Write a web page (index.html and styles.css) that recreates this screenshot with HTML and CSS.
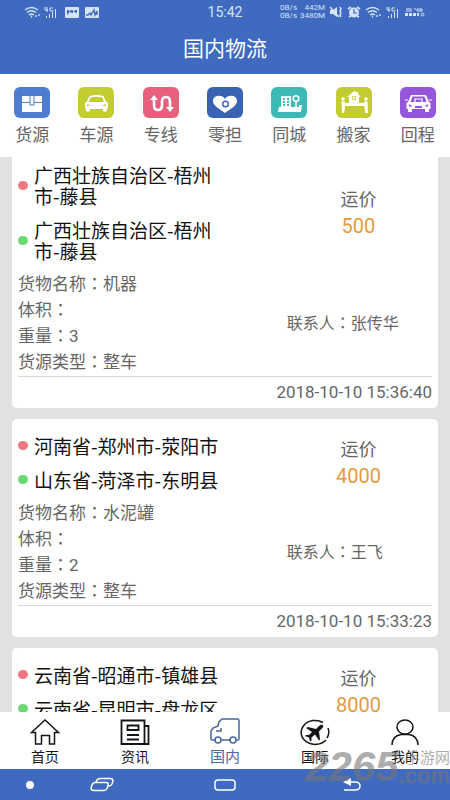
FILE: index.html
```html
<!DOCTYPE html>
<html lang="zh-CN">
<head>
<meta charset="utf-8">
<meta name="viewport" content="width=device-width, initial-scale=1">
<title>国内物流</title>
<link rel="stylesheet" href="styles.css">
</head>
<body>
<header class="top">
  <div class="status">
    <div class="status-left">
      <svg width="17" height="13" viewBox="0 0 17 13" fill="none" stroke="currentColor" stroke-width="1.3"><path d="M1 4Q7.500-1 14 4M3 6.500Q7.500 3 12 6.500M5 9Q7.500 7 10 9"/><path d="M7.500 9.500v2M12 9v2M15 8v2"/></svg>
      <svg class="cell" width="14" height="13" viewBox="0 0 14 13" fill="none" stroke="currentColor"><path d="M1 1v3h3M3 1v5M9 2H6v3h3V4M2.500 10v2M5.500 8v4M8.500 6v6M11.500 3v9"/></svg>
      <svg class="pic" width="14" height="11" viewBox="0 0 14 11"><rect width="14" height="11" rx="1" fill="currentColor"/><path d="M2 8V3h2v2l2-2h2v3l2-3h2v3l-3-1-2 1-2-1z" fill="#3f6abf"/></svg>
      <svg class="chart" width="14" height="11" viewBox="0 0 14 11"><rect width="14" height="11" rx="1" fill="currentColor"/><path d="M1 8h2l2-2 1 2 3-5 1 5 2-4v4" fill="none" stroke="#3f6abf" stroke-width="1.400"/></svg>
    </div>
    <time class="clock">15:42</time>
    <div class="status-right">
      <div class="net"><span>0B/s</span><span>442M</span><span>0B/s</span><span>3480M</span></div>
      <svg width="14" height="12" viewBox="0 0 14 12"><path d="M1 4h3l4-3v10L4 8H1z" fill="currentColor"/><path d="M1 1l9 10M11 1l1 2-1 2 1 2-1 2 1 2" fill="none" stroke="currentColor" stroke-width="1.500"/></svg>
      <svg width="14" height="12" viewBox="0 0 14 12"><circle cx="7" cy="6.500" r="5" fill="currentColor"/><path d="M1 3l3-2M10 1l3 2M2 11l2-1M12 11l-2-1" stroke="currentColor" stroke-width="1.800"/><path d="M7 3v4h3" fill="none" stroke="#3f6abf" stroke-width="1.200"/></svg>
      <svg class="wifi2" width="17" height="13" viewBox="0 0 17 13" fill="none" stroke="currentColor" stroke-width="1.3"><path d="M1 4Q7.500-1 14 4M3 6.500Q7.500 3 12 6.500M5 9Q7.500 7 10 9"/><path d="M7.500 9.500v2M12 9v2M15 8v2"/></svg>
      <svg width="14" height="13" viewBox="0 0 14 13" fill="none" stroke="currentColor"><path d="M1 1v3h3M3 1v5M9 2H6v3h3V4M2.500 10v2M5.500 8v4M8.500 6v6M11.500 3v9"/></svg>
      <svg class="battery" width="22" height="10" viewBox="0 0 22 10" fill="none" stroke="currentColor"><path d="M2 2h6M2 4h6M10 2h2M13 2h5v2h-5z"/><path d="M1 7.500h14" stroke-width="3" stroke-dasharray="3 1"/><circle cx="18.500" cy="7.500" r="1.500"/></svg>
    </div>
  </div>
  <h1 class="title">国内物流</h1>
</header>

<nav class="cats">
  <a href="#" class="cat"><svg class="tile" viewBox="0 0 36 31"><rect width="36" height="31" rx="6" fill="#4f7bd0"/><path d="M8 9h20v6H8zM8 16h20v9H8z" fill="#fff"/><path d="M15.500 9h5v9.500h-5z" fill="#4f7bd0"/><path d="M16.500 9h3v8.500h-3z" fill="#fff"/></svg>货源</a>
  <a href="#" class="cat"><svg class="tile" viewBox="0 0 36 31"><rect width="36" height="31" rx="6" fill="#c3cc31"/><path d="M11.500 9Q18.500 7 25.500 9L28 14.500l2 1.500v5.500h-1V24q-2.500 1.500-4 0v-2H12v2q-2.500 1.500-4 0v-2.500H7V16l2-1.500z" fill="#fff"/><path d="M12.500 10.500Q18.500 9 24.500 10.500L26 15H11zM9 17l4 1.500-4 .5zM28 17l-4 1.500 4 .5z" fill="#c3cc31"/></svg>车源</a>
  <a href="#" class="cat"><svg class="tile" viewBox="0 0 36 31"><rect width="36" height="31" rx="6" fill="#e8607c"/><path d="M11 12v6q0 5 4 5t4-5v-3q0-5 4-5t4 5v6" fill="none" stroke="#fff" stroke-width="2.600"/><path d="M7 13l4-5 4 5zM23 20l4 5 4-5z" fill="#fff"/></svg>专线</a>
  <a href="#" class="cat"><svg class="tile" viewBox="0 0 36 31"><rect width="36" height="31" rx="6" fill="#3a62b3"/><path d="M18 12c-3-5-12-4-12 2 0 5 7 8 12 12 5-4 12-7 12-12 0-6-9-7-12-2z" fill="#fff"/><circle cx="18.500" cy="17" r="2.800" fill="none" stroke="#3a62b3" stroke-width="1.400"/></svg>零担</a>
  <a href="#" class="cat"><svg class="tile" viewBox="0 0 36 31"><rect width="36" height="31" rx="6" fill="#3dbab6"/><path d="M10 9h10v11h8v-2h3l-1 7H7l1-5h2z" fill="#fff"/><path d="M12 12h2M16 12h2M12 15h2M16 15h2M12 18h2M16 18h2" stroke="#3dbab6" stroke-width="1.800"/><circle cx="25" cy="11.500" r="2.800" fill="none" stroke="#fff" stroke-width="1.600"/><path d="M25 14v7" stroke="#fff" stroke-width="1.500"/></svg>同城</a>
  <a href="#" class="cat"><svg class="tile" viewBox="0 0 36 31"><rect width="36" height="31" rx="6" fill="#c3cc31"/><path d="M11 10l7-6 2 1.500V5h2v2l3 3h-2v6H13v-6zM8 16h21v3H8z" fill="#fff"/><path d="M16 9h4v4h-4z" fill="#c3cc31"/><path d="M16 11h4M18 9v4" stroke="#fff"/><circle cx="7" cy="12" r="1.800" fill="#fff"/><circle cx="30" cy="12" r="1.800" fill="#fff"/><path d="M5.500 14.500H9V21l-1 5H6zM28 14.500h3.500l.5 11.500h-3z" fill="#fff"/></svg>搬家</a>
  <a href="#" class="cat"><svg class="tile" viewBox="0 0 36 31"><rect width="36" height="31" rx="6" fill="#9556dc"/><path d="M11 8h15l3 7 1.500 1v6H29v3h-4v-3H12v3H8v-3H6.500v-6L8 15z" fill="#fff"/><path d="M12.500 9.500h12l2 5.500H10.500z" fill="#9556dc"/><path d="M15 15v-3h7v3M5 13h3M29 13h3" fill="none" stroke="#fff" stroke-width="1.200"/><path d="M8.500 17l4 2-3 1zM28.500 17l-4 2 3 1zM15 19h7v2h-7z" fill="#9556dc"/></svg>回程</a>
</nav>

<main class="list">
  <article class="card">
    <div class="info">
      <div class="routes">
        <p class="route from">广西壮族自治区-梧州市-藤县</p>
        <p class="route to">广西壮族自治区-梧州市-藤县</p>
      </div>
      <div class="price"><span>运价</span><strong>500</strong></div>
      <div class="details">
        <p>货物名称<span class="colon" lang="zh-TW">：</span>机器</p>
        <p>体积<span class="colon" lang="zh-TW">：</span></p>
        <p>重量<span class="colon" lang="zh-TW">：</span>3</p>
        <p>货源类型<span class="colon" lang="zh-TW">：</span>整车</p>
      </div>
      <p class="contact">联系人<span class="colon" lang="zh-TW">：</span>张传华</p>
    </div>
    <time class="date">2018-10-10 15:36:40</time>
  </article>
  <article class="card">
    <div class="info">
      <div class="routes">
        <p class="route from">河南省-郑州市-荥阳市</p>
        <p class="route to">山东省-菏泽市-东明县</p>
      </div>
      <div class="price"><span>运价</span><strong>4000</strong></div>
      <div class="details">
        <p>货物名称<span class="colon" lang="zh-TW">：</span>水泥罐</p>
        <p>体积<span class="colon" lang="zh-TW">：</span></p>
        <p>重量<span class="colon" lang="zh-TW">：</span>2</p>
        <p>货源类型<span class="colon" lang="zh-TW">：</span>整车</p>
      </div>
      <p class="contact">联系人<span class="colon" lang="zh-TW">：</span>王飞</p>
    </div>
    <time class="date">2018-10-10 15:33:23</time>
  </article>
  <article class="card">
    <div class="info">
      <div class="routes">
        <p class="route from">云南省-昭通市-镇雄县</p>
        <p class="route to">云南省-昆明市-盘龙区</p>
      </div>
      <div class="price"><span>运价</span><strong>8000</strong></div>
    </div>
  </article>
</main>

<footer class="bottom">
  <nav class="tabs">
    <a href="#" class="tab"><svg viewBox="0 0 32 28"><path d="M2.500 14.500L16 2l13.500 12.500h-4V26h-5v-8.500h-8V26h-6V14.500z"/></svg>首页</a>
    <a href="#" class="tab"><svg viewBox="0 0 32 28"><path d="M2.500 2.500h23V26h-23zM25.500 8h4v18h-4M8.500 7.500h11v4.500h-11zM8 17h12M8 21.500h12" stroke-width="1.800"/></svg>资讯</a>
    <a href="#" class="tab active"><svg viewBox="0 0 32 28"><path d="M6 22H3q-1 0-1-1v-8l2-3 5-2 1-4 3-3h15q2 0 2 2v18q0 1-1 1h-2M12 22h9M12 10v3H7"/><circle cx="9" cy="22" r="3"/><circle cx="24" cy="22" r="3"/></svg>国内</a>
    <a href="#" class="tab"><svg viewBox="0 0 32 28"><path d="M24 4.500A14 12 0 1 0 27 22M29 10q2 5-1 10"/><path d="M24 7q-2-1-4 1l-3 3-8-2-2 1 6 4-3 3-3 0-1 1 4 1.500 1 4 1.500-1 0-3 3.500-3 4 6 1-1-1-8 3-3q2-2 1-3.500z" fill="currentColor" stroke="none"/></svg>国际</a>
    <a href="#" class="tab"><svg viewBox="0 0 32 28"><ellipse cx="16" cy="9" rx="8" ry="7"/><path d="M3 27q0-9 9-10.500h8q9 1.500 9 10.500"/></svg>我的</a>
  </nav>
  <div class="keys">
    <svg class="key-dot" width="8" height="8" viewBox="0 0 8 8"><circle cx="4" cy="4" r="3.200" fill="currentColor"/></svg>
    <svg class="key-recent" width="24" height="16" viewBox="0 0 24 16"><path d="M6 5l1-2q1-1.500 3-1.500h10q3 0 3 2.500l-1 3q-1 2-3 2h-1M5 5.500h11q3 0 2 3l-1 3q-1 2-3 2H4q-3 0-3-2.500l1-3q1-2.500 3-2.500z"/></svg>
    <svg class="key-home" width="22" height="12" viewBox="0 0 22 12"><rect x="1" y="1" width="20" height="10" rx="3"/></svg>
    <svg class="key-back" width="18" height="14" viewBox="0 0 18 14"><path d="M4 4h8q5 0 5 4t-5 4H1"/><path d="M0 4l8-4v8z" fill="currentColor" stroke="none"/></svg>
  </div>
  <div class="mark"><span class="mark-num">2265</span><span class="mark-site"><span>手游网</span><b>.com</b></span></div>
</footer>
</body>
</html>
```
FILE: styles.css
```css
* { box-sizing: border-box; }

body {
  margin: 0;
  height: 100vh;
  display: flex;
  flex-direction: column;
  overflow: hidden;
  background: #e2e0e2;
  color: #666;
  font-family: Roboto, "Noto Sans CJK SC", sans-serif;
}

p, h1 { margin: 0; }
a { color: inherit; text-decoration: none; }
svg { display: block; flex: none; }

.top { background: #3f6abf; color: #fff; }

.status {
  display: grid;
  grid-template-columns: 1fr auto 1fr;
  align-items: center;
  height: 24px;
  padding: 0 24px;
  color: #d5e4fb;
}
.status-left, .status-right { display: flex; align-items: center; }
.status-left { gap: 3px; }
.status-left .pic { margin-left: 4px; }
.status-left .chart { margin-left: 3px; }
.status-right { justify-content: flex-end; gap: 4px; }
.clock { font-size: 14px; line-height: 24px; }
.net {
  display: grid;
  grid-template-columns: auto auto;
  column-gap: 3px;
  font-size: 8px;
  line-height: 8px;
  text-align: right;
}

.title {
  height: 50px;
  font-size: 21px;
  line-height: 50px;
  font-weight: 400;
  text-align: center;
}

.cats { display: flex; background: #fff; height: 83px; padding-top: 13px; }
.cat {
  flex: 1;
  display: flex;
  flex-direction: column;
  align-items: center;
  gap: 5px;
  font-size: 17px;
  line-height: 24px;
}
.tile { width: 36px; height: 31px; }

.list {
  flex: 1;
  min-height: 0;
  overflow: hidden;
  padding: 0 12px;
  display: flex;
  flex-direction: column;
  gap: 11px;
}
.card {
  flex: none;
  padding: 16px 6px 0;
  background: #fff;
  border-radius: 5px;
}
.card:first-child { margin-top: -9px; }

.info {
  display: grid;
  grid-template-columns: 63fr 37fr;
  row-gap: 9px;
  align-items: center;
}
.routes { display: flex; flex-direction: column; gap: 13px; padding-right: 54px; }
.route {
  display: flex;
  align-items: center;
  gap: 6px;
  color: #111;
  font-family: "Noto Sans CJK SC", sans-serif;
  font-size: 19px;
  line-height: 21px;
}
.route::before {
  content: "";
  flex: none;
  width: 10px;
  height: 9px;
  border-radius: 50%;
  background: #ee7780;
}
.to::before { background: #69d873; }

.price {
  display: flex;
  flex-direction: column;
  align-items: center;
  padding-left: 6px;
  font-size: 18px;
  line-height: 27px;
}
.price strong { color: #e49b3c; font-size: 20px; font-weight: 400; }

.details { font-size: 17px; line-height: 26px; }
.details p, .contact { height: 26px; }
.contact { padding-left: 8px; font-size: 16px; line-height: 26px; }
.colon { font-family: "Noto Sans CJK TC", sans-serif; }

.date {
  display: block;
  margin-top: 2px;
  border-top: 1px solid #d8d8d8;
  font-size: 17px;
  line-height: 31px;
  text-align: right;
}

.bottom { position: relative; }
.tabs { display: flex; background: #fff; height: 57px; padding-top: 6px; }
.tab {
  flex: 1;
  display: flex;
  flex-direction: column;
  align-items: center;
  gap: 1px;
  color: #151515;
  font-size: 14px;
  line-height: 20px;
}
.tab svg {
  width: 32px;
  height: 28px;
  fill: none;
  stroke: currentColor;
  stroke-width: 1.5px;
}
.active { color: #4766a6; font-size: 15px; }

.keys {
  display: grid;
  grid-template-columns: repeat(5, minmax(0, 1fr));
  align-items: center;
  height: 31px;
  background: #3f6abf;
  color: #fff;
}
.keys svg { fill: none; stroke: currentColor; stroke-width: 1.5px; }
.keys .key-dot { margin-left: 26px; }
.keys .key-home { justify-self: center; grid-column: 3; }
.keys .key-back { grid-column: 4; margin-left: 73px; }

.mark {
  position: absolute;
  right: 0;
  bottom: 15px;
  display: flex;
  align-items: flex-end;
  color: #777;
  opacity: 0.6;
  pointer-events: none;
}
.mark-num { font: italic 700 42px/36px "Liberation Sans", sans-serif; }
.mark-site { display: flex; flex-direction: column; align-items: flex-end; font-size: 15px; line-height: 18px; }
.mark-site b { font: 700 22px/18px "Liberation Sans", sans-serif; }
```
